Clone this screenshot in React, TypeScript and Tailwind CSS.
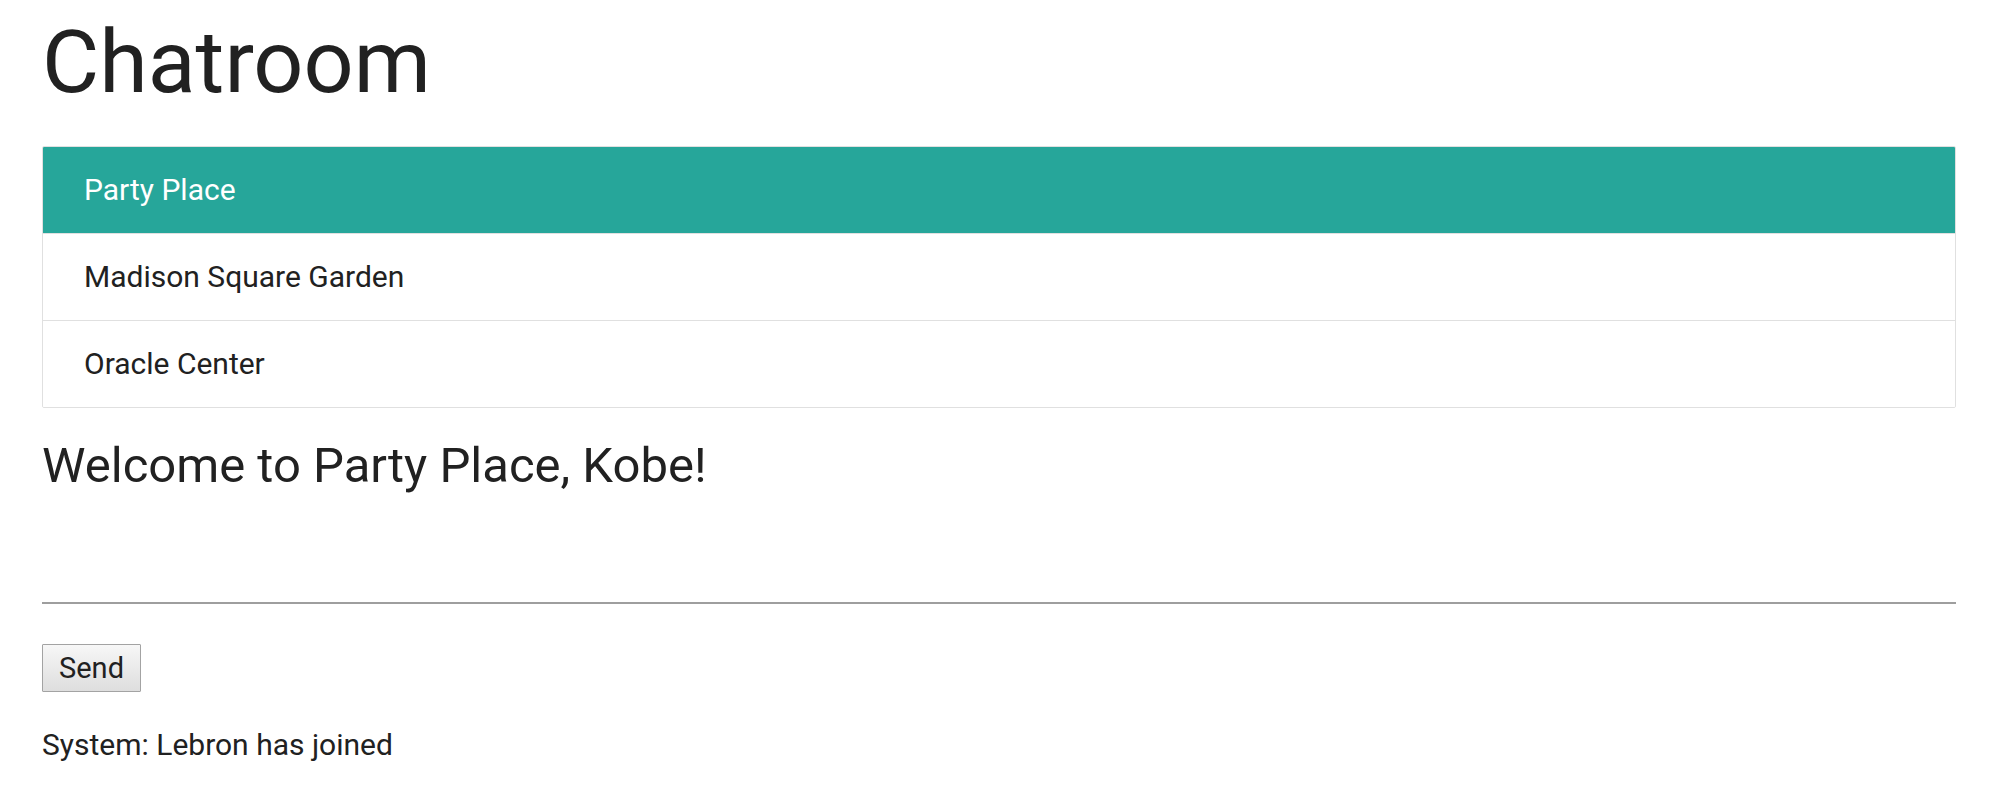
import React, { useState } from 'react';

const rooms = ['Party Place', 'Madison Square Garden', 'Oracle Center'];

export default function App() {
  const [active, setActive] = useState(0);
  const [text, setText] = useState('');

  return (
    <div className="min-h-screen bg-white font-['Roboto',sans-serif] text-[#212121]">
      <div className="pl-[42px] pr-[55px] pt-[12px]">
        <h1 className="text-[88px] leading-[99px] font-normal">Chatroom</h1>

        {/* Room list */}
        <div className="mt-[35px] border border-[#e0e0e0] rounded-[2px] overflow-hidden">
          {rooms.map((room, i) => (
            <div
              key={room}
              onClick={() => setActive(i)}
              className={
                i === active
                  ? 'h-[87px] border-b border-[#e0e0e0] bg-[#26a69a] text-white pl-[41px] text-[30px] leading-[86px] cursor-pointer'
                  : i === rooms.length - 1
                  ? 'h-[86px] bg-white pl-[41px] text-[30px] leading-[86px] cursor-pointer'
                  : 'h-[87px] border-b border-[#e0e0e0] bg-white pl-[41px] text-[30px] leading-[86px] cursor-pointer'
              }
            >
              {room}
            </div>
          ))}
        </div>

        <h4 className="mt-[31px] text-[49px] leading-[53px] font-normal">
          Welcome to {rooms[active]}, Kobe!
        </h4>

        <input
          value={text}
          onChange={e => setText(e.target.value)}
          className="block mt-[48px] w-full h-[64px] border-b-2 border-[#9e9e9e] outline-none bg-transparent text-[30px]"
        />

        <button className="mt-[40px] h-[48px] w-[99px] border border-[#a3a3a3] rounded-[1px] bg-gradient-to-b from-[#f7f7f7] to-[#dedede] text-[29px] leading-none text-[#212121]">
          Send
        </button>

        <div className="mt-[31px] text-[30px] leading-[44px]">System: Lebron has joined</div>
      </div>
    </div>
  );
}
